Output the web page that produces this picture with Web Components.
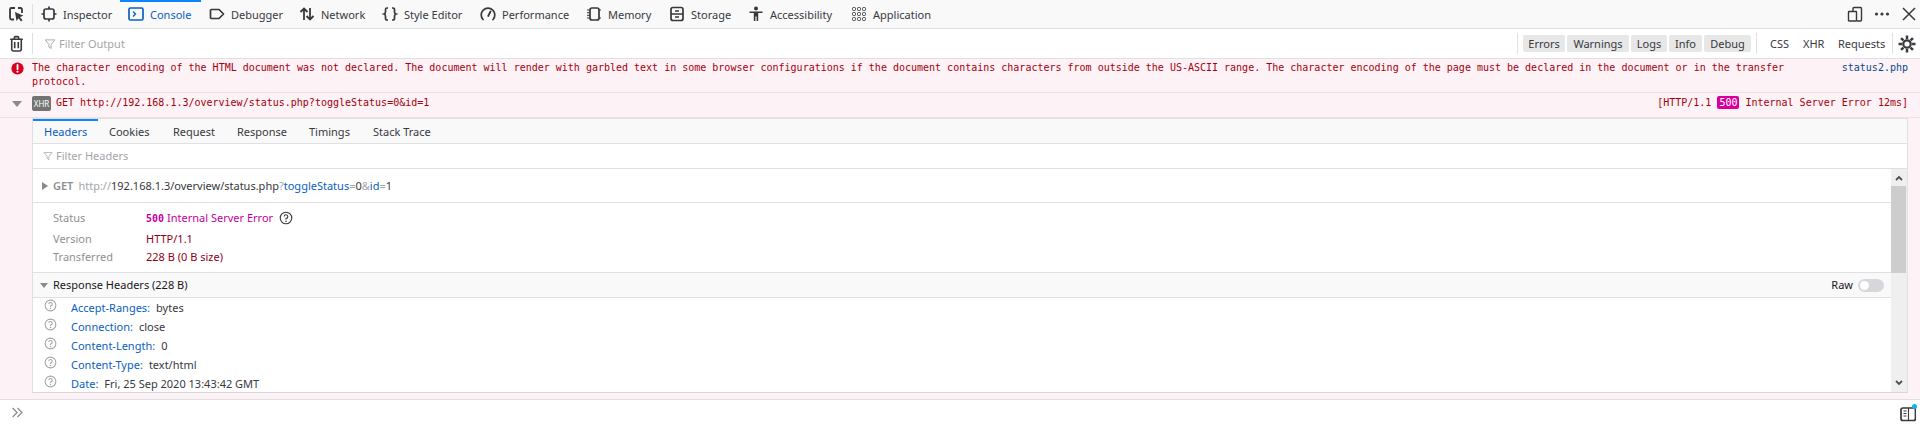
<!DOCTYPE html>
<html>
<head>
<meta charset="utf-8">
<style>
  html, body { margin: 0; height: 433px; overflow: hidden; background: #fff; }
  body { font: 11px/16px "Noto Sans", sans-serif; color: #38383d; display: flex; flex-direction: column; }
</style>
</head>
<body>
<dev-tabs></dev-tabs>
<console-bar></console-bar>
<console-error></console-error>
<xhr-row></xhr-row>
<div style="flex:1;min-height:0;display:flex;background:#fdf2f5;padding:0 12px 6px 32px;border-bottom:1px solid #e0e0e2">
  <net-detail style="flex:1"></net-detail>
</div>
<console-input></console-input>

<script>
// Inline SVGs, same idea for every toolbar button
const ICONS = {
  picker: `<path d="M7 2H3.500a1.500 1.500 0 0 0-1.500 1.500v8.500a1.500 1.500 0 0 0 1.500 1.500H6M14 7V3.500A1.500 1.500 0 0 0 12.500 2H10" fill="none" stroke="currentColor" stroke-width="1.800"/><path d="M7 6l8.500 3.800-3.500 1.200 2.500 3.300-1.500 1.200-2.400-3.300L8.500 15z" fill="currentColor"/>`,
  inspector: `<rect x="3" y="3" width="10" height="10" rx="2" fill="none" stroke="currentColor" stroke-width="1.700"/><path d="M8 0.500v2.500M8 13v2.500M0.500 8H3M13 8h2.500" stroke="currentColor" stroke-width="1.700"/>`,
  console: `<rect x="1" y="2" width="14" height="12" rx="1.500" fill="none" stroke="currentColor" stroke-width="1.700"/><path d="M5 5.500L7.500 8 5 10.500" fill="none" stroke="currentColor" stroke-width="1.400"/>`,
  debugger: `<path d="M2.500 3.500h7.500l4.500 4.500-4.500 4.500H2.500a1 1 0 0 1-1-1v-7a1 1 0 0 1 1-1z" fill="none" stroke="currentColor" stroke-width="1.700" stroke-linejoin="round"/>`,
  network: `<path d="M5 14V2.500M1.500 6L5 2.500 8.500 6M11 2v11.500M7.500 10l3.500 3.500 3.500-3.500" fill="none" stroke="currentColor" stroke-width="1.800"/>`,
  style: `<path d="M6 2H5a1.500 1.500 0 0 0-1.500 1.500v2.500c0 1-.5 1.700-1.500 2 1 .3 1.500 1 1.500 2v2.500A1.500 1.500 0 0 0 5 14h1M10 2h1a1.500 1.500 0 0 1 1.500 1.500v2.500c0 1 .5 1.700 1.500 2-1 .3-1.500 1-1.500 2v2.500A1.500 1.500 0 0 1 11 14h-1" fill="none" stroke="currentColor" stroke-width="1.700"/>`,
  performance: `<path d="M3 13.500A6.800 6.800 0 1 1 13 13.500" fill="none" stroke="currentColor" stroke-width="1.700" stroke-linecap="round"/><path d="M8.200 10L10.500 5.500" stroke="currentColor" stroke-width="1.800" stroke-linecap="round"/>`,
  memory: `<rect x="4" y="2" width="9" height="12" rx="2" fill="none" stroke="currentColor" stroke-width="1.700"/><path d="M1 4h3M1 6.700h3M1 9.300h3M1 12h3M13 4h2M13 12h2" stroke="currentColor" stroke-width="1"/>`,
  storage: `<rect x="2" y="1.500" width="12" height="13" rx="2" fill="none" stroke="currentColor" stroke-width="1.700"/><path d="M2 8h12M6 5h4M6 11h4" stroke="currentColor" stroke-width="1.400"/>`,
  access: `<circle cx="8" cy="2.500" r="2" fill="currentColor"/><path d="M1.500 5.500h13v1.600H10.200V15H8.600v-4.500H7.400V15H5.800V7.100H1.500z" fill="currentColor"/>`,
  app: `<g fill="none" stroke="currentColor" stroke-width="1"><rect x="1.500" y="1.500" width="3" height="3" rx="1"/><rect x="6.500" y="1.500" width="3" height="3" rx="1"/><rect x="11.500" y="1.500" width="3" height="3" rx="1"/><rect x="1.500" y="6.500" width="3" height="3" rx="1"/><rect x="6.500" y="6.500" width="3" height="3" rx="1"/><rect x="11.500" y="6.500" width="3" height="3" rx="1"/><rect x="1.500" y="11.500" width="3" height="3" rx="1"/><rect x="6.500" y="11.500" width="3" height="3" rx="1"/><rect x="11.500" y="11.500" width="3" height="3" rx="1"/></g>`,
  dock: `<path d="M6 5V2.500a1 1 0 0 1 1-1h6.500a1 1 0 0 1 1 1V14a1 1 0 0 1-1 1H10M2 5.500h7a.500.500 0 0 1 .500.500v8.500a.500.500 0 0 1-.500.500H2a.500.500 0 0 1-.500-.500V6a.500.500 0 0 1 .500-.500z" fill="none" stroke="currentColor" stroke-width="1.400"/>`,
  dots: `<circle cx="2.500" cy="8" r="1.600" fill="currentColor"/><circle cx="8" cy="8" r="1.600" fill="currentColor"/><circle cx="13.500" cy="8" r="1.600" fill="currentColor"/>`,
  close: `<path d="M2 2l12 12M14 2L2 14" stroke="currentColor" stroke-width="1.500"/>`,
  trash: `<path d="M2 4h12M6 4V2.500A1 1 0 0 1 7 1.500h2a1 1 0 0 1 1 1V4M3.500 4v9.500A1.500 1.500 0 0 0 5 15h6a1.500 1.500 0 0 0 1.500-1.500V4M6.300 6.500v6M9.700 6.500v6" fill="none" stroke="currentColor" stroke-width="1.500"/>`,
  filter: `<path d="M1.500 2.500h13L9.500 8.500v5.500l-3-2V8.500z" fill="none" stroke="currentColor" stroke-width="1.200" stroke-linejoin="round"/>`,
  gear: `<circle cx="8" cy="8" r="3.300" fill="none" stroke="currentColor" stroke-width="2"/><path d="M8 .500v3M8 12.500v3M.500 8h3M12.500 8h3M2.700 2.700l2.100 2.100M11.200 11.200l2.100 2.100M13.300 2.700l-2.100 2.100M4.800 11.200l-2.100 2.100" stroke="currentColor" stroke-width="2.200"/>`,
  error: `<circle cx="8" cy="8" r="7.500" fill="#d70022"/><path d="M8 3.500v5.500" stroke="#fff" stroke-width="2.200" stroke-linecap="round"/><circle cx="8" cy="12" r="1.300" fill="#fff"/>`,
  help: `<circle cx="8" cy="8" r="6.600" fill="none" stroke="currentColor" stroke-width="1.300"/><path d="M5.900 6.300A2.100 2.100 0 1 1 8 8.500v1.200" fill="none" stroke="currentColor" stroke-width="1.300"/><circle cx="8" cy="11.800" r=".9" fill="currentColor"/>`,
  prompt: `<path d="M2 2.500L7.500 8 2 13.500M8 2.500L13.500 8 8 13.500" fill="none" stroke="currentColor" stroke-width="1.500"/>`,
  sidebar: `<rect x="1" y="2" width="14.500" height="12.500" rx="2" fill="none" stroke="currentColor" stroke-width="1.700"/><path d="M8.500 2v12.500M3.500 5H6.500M3.500 7.500H6.500M3.500 10H6.500" stroke="currentColor" stroke-width="1.100"/>`
};
const svg = (name, size = 16) => `<svg width="${size}" height="${size}" viewBox="0 0 16 16" aria-hidden="true" style="display:block;flex:none">${ICONS[name]}</svg>`;

class DevTabs extends HTMLElement {
  connectedCallback() {
    const tabs = [
      ['inspector', 'Inspector', 49], ['console', 'Console', 43], ['debugger', 'Debugger', 52],
      ['network', 'Network', 45], ['style', 'Style Editor', 60], ['performance', 'Performance', 68],
      ['memory', 'Memory', 45], ['storage', 'Storage', 41], ['access', 'Accessibility', 65], ['app', 'Application', 62]
    ];
    this.attachShadow({ mode: 'open' }).innerHTML = `
      <style>
        :host { display: flex; flex: none; height: 28px; background: #f9f9fa; border-bottom: 1px solid #e0e0e2; align-items: stretch; color: #38383d; }
        .pick { width: 32px; display: flex; align-items: center; justify-content: center; border-right: 1px solid #e0e0e2; margin: 4px 0; }
        .tab { display: flex; align-items: center; gap: 6px; padding: 0 8px; position: relative; }
        .tab span { white-space: nowrap; display: block; padding-top: 2px; }
        .tab.on { color: #0a60c2; }
        .tab.on::before { content: ''; position: absolute; left: 0; right: 0; top: 0; height: 2px; background: #0a84ff; }
        .side { margin-left: auto; display: flex; align-items: center; gap: 11px; padding-right: 3px; }
      </style>
      <div class="pick">${svg('picker')}</div>
      ${tabs.map(([ic, t, w]) => `<div class="tab${t === 'Console' ? ' on' : ''}">${svg(ic)}<span style="width:${w}px">${t}</span></div>`).join('')}
      <div class="side">${svg('dock')}${svg('dots')}${svg('close')}</div>`;
  }
}
customElements.define('dev-tabs', DevTabs);

class ConsoleBar extends HTMLElement {
  connectedCallback() {
    const levels = [['Errors', 42], ['Warnings', 62], ['Logs', 36], ['Info', 33], ['Debug', 47]];
    const nets = [['CSS', 19], ['XHR', 21], ['Requests', 47]];
    this.attachShadow({ mode: 'open' }).innerHTML = `
      <style>
        :host { display: flex; flex: none; height: 29px; align-items: center; border-bottom: 1px solid #e0e0e2; background: #fff; }
        .trash { width: 32px; height: 21px; display: flex; align-items: center; justify-content: center; border-right: 1px solid #e0e0e2; }
        .filter { flex: 1; display: flex; align-items: center; gap: 3px; padding-left: 11px; color: #a5a5a8; }
        .sep { width: 1px; height: 21px; background: #e0e0e2; }
        .levels { display: flex; gap: 2px; padding: 0 5px; }
        .levels span { height: 17px; line-height: 17px; background: #e7e7e8; border-radius: 2px; text-align: center; }
        .nets { display: flex; gap: 14px; padding: 0 7px 0 13px; }
        .nets span { text-align: center; }
        .gear { width: 27px; display: flex; justify-content: center; }
      </style>
      <div class="trash">${svg('trash', 17)}</div>
      <div class="filter">${svg('filter', 12)}<span>Filter Output</span></div>
      <div class="sep"></div>
      <div class="levels">${levels.map(([t, w]) => `<span style="width:${w}px">${t}</span>`).join('')}</div>
      <div class="sep"></div>
      <div class="nets">${nets.map(([t, w]) => `<span style="width:${w}px">${t}</span>`).join('')}</div>
      <div class="sep"></div>
      <div class="gear">${svg('gear', 18)}</div>`;
  }
}
customElements.define('console-bar', ConsoleBar);

const MONO = `"DejaVu Sans Mono", "Liberation Mono", monospace`;

class ConsoleError extends HTMLElement {
  connectedCallback() {
    this.attachShadow({ mode: 'open' }).innerHTML = `
      <style>
        :host { display: flex; flex: none; height: 34px; box-sizing: border-box; background: #fdf2f5; border-bottom: 1px solid #f0dfe3; font: 10px/14px ${MONO}; color: #a4000f; }
        .ic { width: 32px; padding: 3px 0 0 11px; box-sizing: border-box; }
        .msg { flex: 1; padding-top: 2px; }
        a { color: #0a4a8a; padding: 2px 12px 0 0; }
      </style>
      <div class="ic">${svg('error', 13)}</div>
      <div class="msg">The character encoding of the HTML document was not declared. The document will render with garbled text in some browser configurations if the document contains characters from outside the US-ASCII range. The character encoding of the page must be declared in the document or in the transfer<br>protocol.</div>
      <a>status2.php</a>`;
  }
}
customElements.define('console-error', ConsoleError);

class XhrRow extends HTMLElement {
  connectedCallback() {
    this.attachShadow({ mode: 'open' }).innerHTML = `
      <style>
        :host { display: flex; flex: none; height: 25px; box-sizing: border-box; align-items: flex-start; padding-top: 3px; background: #fdf2f5; border-bottom: 1px solid #f0dfe3; font: 10px/14px ${MONO}; color: #a4000f; }
        .tw { width: 0; height: 0; margin: 5px 0 0 12px; border: 5px solid transparent; border-top: 6px solid #8a8a8f; border-bottom: 0; }
        .xhr { margin-left: 10px; width: 19px; height: 15px; background: #737373; color: #fff; border-radius: 2px; font: 8px/15px "Noto Sans", sans-serif; text-align: center; }
        .url { margin-left: 5px; flex: 1; }
        b { font-weight: normal; background: #d7009e; color: #fff; padding: 0 2px; margin: 0 6px; border-radius: 2px; line-height: 13px; display: inline-block; }
        .st { padding-right: 12px; }
      </style>
      <div class="tw"></div><div class="xhr">XHR</div>
      <div class="url">GET http://192.168.1.3/overview/status.php?toggleStatus=0&amp;id=1</div>
      <div class="st">[HTTP/1.1<b>500</b>Internal Server Error 12ms]</div>`;
  }
}
customElements.define('xhr-row', XhrRow);

class NetDetail extends HTMLElement {
  connectedCallback() {
    const tabs = [['Headers', 43], ['Cookies', 42], ['Request', 42], ['Response', 50], ['Timings', 42], ['Stack Trace', 58]];
    const headers = [['Accept-Ranges:', 'bytes'], ['Connection:', 'close'], ['Content-Length:', '0'], ['Content-Type:', 'text/html'], ['Date:', 'Fri, 25 Sep 2020 13:43:42 GMT']];
    this.attachShadow({ mode: 'open' }).innerHTML = `
      <style>
        :host { display: flex; flex-direction: column; min-width: 0; box-sizing: border-box; background: #fff; border: 1px solid #e0e0e2; border-bottom-color: #d8d8da; }
        .tabs { flex: none; height: 24px; display: flex; background: #f9f9fa; border-bottom: 1px solid #e0e0e2; }
        .tabs span { padding: 0 11px; line-height: 25px; white-space: nowrap; position: relative; }
        .tabs .on { color: #0a60c2; }
        .tabs .on::before { content: ''; position: absolute; left: 0; right: 0; top: 0; height: 2px; background: #0a84ff; }
        .filter { flex: none; height: 24px; display: flex; align-items: center; gap: 3px; padding-left: 10px; color: #a5a5a8; border-bottom: 1px solid #e0e0e2; }
        .scroll { flex: 1; min-height: 0; display: flex; }
        .body { flex: 1; min-width: 0; overflow: hidden; }
        .bar { width: 16px; flex: none; background: #efefef; position: relative; display: flex; flex-direction: column; align-items: center; justify-content: space-between; padding: 6px 0; box-sizing: border-box; color: #505050; }
        .thumb { position: absolute; left: 0; right: 1px; top: 17px; height: 87px; background: #cdcdcd; }
        .sum { height: 34px; box-sizing: border-box; display: flex; align-items: center; border-bottom: 1px solid #e0e0e2; padding-left: 9px; color: #38383d; }
        .tw { width: 0; height: 0; border: 4px solid transparent; border-left: 6px solid #8a8a8f; border-right: 0; margin-right: 5px; }
        .sum strong { color: #8f8f93; font-weight: 600; margin-right: 5px; }
        .g { color: #a5a5a8; }
        .k { color: #0a60c2; }
        .info { border-bottom: 1px solid #e0e0e2; padding-top: 6px; box-sizing: border-box; height: 70px; }
        .info div { display: grid; grid-template-columns: 93px auto; padding-left: 20px; height: 18px; align-items: center; color: #8f0016; }
        .info div.first { height: 21px; padding-bottom: 3px; box-sizing: border-box; }
        .info label { color: #8f8f93; }
        .st { color: #c400a0; display: flex; align-items: center; gap: 3px; }
        .st code { font: bold 10px ${MONO}; }
        .st svg { margin-left: 3px; color: #38383d; }
        .head { height: 24px; display: flex; align-items: center; background: #f9f9fa; border-bottom: 1px solid #e0e0e2; padding-left: 7px; color: #18181a; }
        .tw2 { width: 0; height: 0; border: 4px solid transparent; border-top: 5px solid #8a8a8f; border-bottom: 0; margin-right: 5px; }
        .raw { margin-left: auto; margin-right: 7px; display: flex; align-items: center; gap: 5px; }
        .sw { width: 26px; height: 13px; border-radius: 7px; background: #d7d7db; position: relative; }
        .sw::after { content: ''; position: absolute; left: 2px; top: 2px; width: 9px; height: 9px; border-radius: 50%; background: #fff; }
        .row { height: 19px; display: flex; align-items: center; color: #38383d; }
        .row span { padding-top: 1px; }
        .row svg { margin: -4px 0 0 11px; color: #a5a5a8; }
        .row .k { margin: 0 6px 0 14px; }
      </style>
      <div class="tabs">${tabs.map(([t, w], i) => `<span class="${i ? '' : 'on'}" style="width:${w}px">${t}</span>`).join('')}</div>
      <div class="filter">${svg('filter', 10)}<span>Filter Headers</span></div>
      <div class="scroll">
        <div class="body">
          <div class="sum"><i class="tw"></i><strong>GET</strong><span class="g">http://</span><span>192.168.1.3/overview/status.php</span><span class="g">?</span><span class="k">toggleStatus</span><span class="g">=</span><span>0</span><span class="g">&amp;</span><span class="k">id</span><span class="g">=</span><span>1</span></div>
          <div class="info">
            <div class="first"><label>Status</label><span class="st"><code>500</code>Internal Server Error${svg('help', 14)}</span></div>
            <div><label>Version</label><span>HTTP/1.1</span></div>
            <div><label>Transferred</label><span>228 B (0 B size)</span></div>
          </div>
          <div class="head"><i class="tw2"></i>Response Headers (228 B)<span class="raw">Raw<i class="sw"></i></span></div>
          ${headers.map(([k, v]) => `<div class="row">${svg('help', 13)}<span class="k">${k}</span><span>${v}</span></div>`).join('')}
        </div>
        <div class="bar">
          <div class="thumb"></div>
          <svg width="8" height="6" viewBox="0 0 8 6" style="position:relative"><path d="M1 5l3-3 3 3" fill="none" stroke="currentColor" stroke-width="1.800"/></svg>
          <svg width="8" height="6" viewBox="0 0 8 6" style="position:relative"><path d="M1 1l3 3 3-3" fill="none" stroke="currentColor" stroke-width="1.800"/></svg>
        </div>
      </div>`;
  }
}
customElements.define('net-detail', NetDetail);

class ConsoleInput extends HTMLElement {
  connectedCallback() {
    this.attachShadow({ mode: 'open' }).innerHTML = `
      <style>
        :host { display: flex; flex: none; height: 33px; align-items: flex-start; justify-content: space-between; background: #fff; padding: 6px 4px 0 11px; box-sizing: border-box; }
        .p { color: #8a8a8f; }
        .s { position: relative; color: #38383d; }
        .s::after { content: ''; position: absolute; right: -1px; top: -2px; width: 5px; height: 5px; border-radius: 50%; background: #0ab4f0; }
      </style>
      <div class="p">${svg('prompt', 13)}</div>
      <div class="s">${svg('sidebar')}</div>`;
  }
}
customElements.define('console-input', ConsoleInput);
</script>
</body>
</html>
